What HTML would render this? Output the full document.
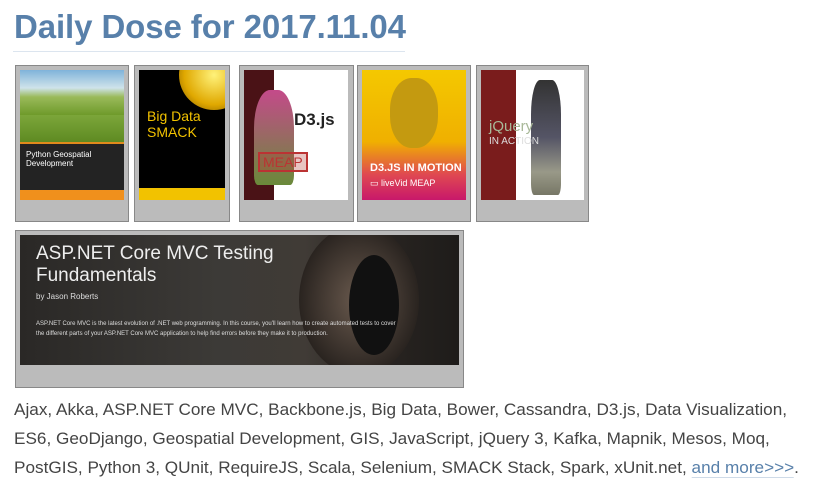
<!DOCTYPE html>
<html><head><style>
body{margin:0;background:#fff;width:814px;height:496px;overflow:hidden;position:relative;font-family:"Liberation Sans",sans-serif}
h1{position:absolute;left:14px;top:8px;margin:0;font-size:33px;font-weight:bold;color:#5880aa;letter-spacing:-0.1px;white-space:nowrap}
.ul{position:absolute;left:13px;top:51px;width:392px;height:1px;background:#dce5ef}
.box{position:absolute;background:#bbb;border:1px solid #888;box-sizing:border-box}
.cv{position:absolute;overflow:hidden}
.line{position:absolute;left:14px;font-size:17px;color:#444;white-space:nowrap;transform-origin:left top}
a{color:#5880aa;text-decoration:none;border-bottom:1px solid #cfdbe8}
</style></head><body>
<h1>Daily Dose for 2017.11.04</h1>
<div class="ul"></div>

<div class="box" style="left:15px;top:65px;width:114px;height:157px"></div>
<div class="cv" style="left:20px;top:70px;width:104px;height:130px;background:#232323">
 <div style="height:45px;background:linear-gradient(#7fb3da,#cfe3ea 40%,#9aba5a 60%,#6e9a2a)"></div>
 <div style="height:27px;background:linear-gradient(#7ca63a,#5e8a22)"></div>
 <div style="height:2px;background:#e08a1c"></div>
 <div style="color:#fff;font-size:8px;padding:6px 6px 0">Python Geospatial Development</div>
 <div style="position:absolute;bottom:0;left:0;width:104px;height:10px;background:#f0901c"></div>
</div>

<div class="box" style="left:134px;top:65px;width:96px;height:157px"></div>
<div class="cv" style="left:139px;top:70px;width:86px;height:130px;background:#000">
 <div style="position:absolute;left:40px;top:-30px;width:70px;height:70px;border-radius:50%;background:radial-gradient(#fff27a,#e0a800 60%,#6b4a00)"></div>
 <div style="position:absolute;left:8px;top:38px;color:#f2c200;font-size:14px;line-height:16px">Big Data<br>SMACK</div>
 <div style="position:absolute;bottom:0;left:0;width:86px;height:12px;background:#f2c200"></div>
</div>

<div class="box" style="left:239px;top:65px;width:115px;height:157px"></div>
<div class="cv" style="left:244px;top:70px;width:104px;height:130px;background:#fff">
 <div style="position:absolute;left:0;top:0;width:30px;height:130px;background:#4a1216"></div>
 <div style="position:absolute;left:10px;top:20px;width:40px;height:95px;background:linear-gradient(#c44a8a,#6a8a3a);border-radius:40% 40% 10% 10%"></div>
 <div style="position:absolute;left:50px;top:40px;color:#222;font-size:17px;font-weight:bold">D3.js</div>
 <div style="position:absolute;left:14px;top:82px;border:2px solid #b33;color:#b33;font-size:14px;padding:0 3px;background:rgba(180,60,50,.3)">MEAP</div>
</div>

<div class="box" style="left:357px;top:65px;width:114px;height:157px"></div>
<div class="cv" style="left:362px;top:70px;width:104px;height:130px;background:linear-gradient(#f4c800,#f0b000 55%,#e04a50 80%,#c8186a)">
 <div style="position:absolute;left:28px;top:8px;width:48px;height:70px;border-radius:45%;background:#c49a10"></div>
 <div style="position:absolute;left:8px;top:92px;color:#fff;font-size:11px;font-weight:bold">D3.JS IN MOTION</div>
 <div style="position:absolute;left:8px;top:108px;color:#fff;font-size:9px">▭ liveVid MEAP</div>
</div>

<div class="box" style="left:476px;top:65px;width:113px;height:157px"></div>
<div class="cv" style="left:481px;top:70px;width:103px;height:130px;background:#fff">
 <div style="position:absolute;left:0;top:0;width:35px;height:130px;background:#7a1c1c"></div>
 <div style="position:absolute;left:50px;top:10px;width:30px;height:115px;background:linear-gradient(#333,#556 50%,#998 80%,#776);border-radius:30% 30% 10% 10%"></div>
 <div style="position:absolute;left:8px;top:48px;color:#a8b898;font-size:15px">jQuery</div>
 <div style="position:absolute;left:8px;top:66px;color:#ddd;font-size:10px">IN ACTION</div>
</div>

<div class="box" style="left:15px;top:230px;width:449px;height:158px"></div>
<div class="cv" style="left:20px;top:235px;width:439px;height:130px;background:linear-gradient(90deg,#2a2826,#3c3a37 45%,#403b36 65%,#2a2522 80%,#1e1c1a);color:#fff">
 <div style="position:absolute;right:40px;top:-10px;width:120px;height:150px;border-radius:50%;background:radial-gradient(#6a5a4e,#2a2420 70%)"></div>
 <div style="position:absolute;right:60px;top:20px;width:50px;height:100px;border-radius:50%;background:#111"></div>
 <div style="position:absolute;left:16px;top:8px;font-size:19px;line-height:22px;font-weight:300;color:#eee">ASP.NET Core MVC Testing<br>Fundamentals</div>
 <div style="position:absolute;left:16px;top:57px;font-size:8px;color:#ddd">by Jason Roberts</div>
 <div style="position:absolute;left:16px;top:84px;font-size:6px;line-height:10px;color:#ddd;width:360px">ASP.NET Core MVC is the latest evolution of .NET web programming. In this course, you'll learn how to create automated tests to cover the different parts of your ASP.NET Core MVC application to help find errors before they make it to production.</div>
</div>

<div class="line" style="top:400px;transform:scaleX(1.01)">Ajax, Akka, ASP.NET Core MVC, Backbone.js, Big Data, Bower, Cassandra, D3.js, Data Visualization,</div>
<div class="line" style="top:429px;transform:scaleX(1.01)">ES6, GeoDjango, Geospatial Development, GIS, JavaScript, jQuery 3, Kafka, Mapnik, Mesos, Moq,</div>
<div class="line" style="top:458px;transform:scaleX(1.01)">PostGIS, Python 3, QUnit, RequireJS, Scala, Selenium, SMACK Stack, Spark, xUnit.net, <a>and more&gt;&gt;&gt;</a>.</div>
</body></html>
